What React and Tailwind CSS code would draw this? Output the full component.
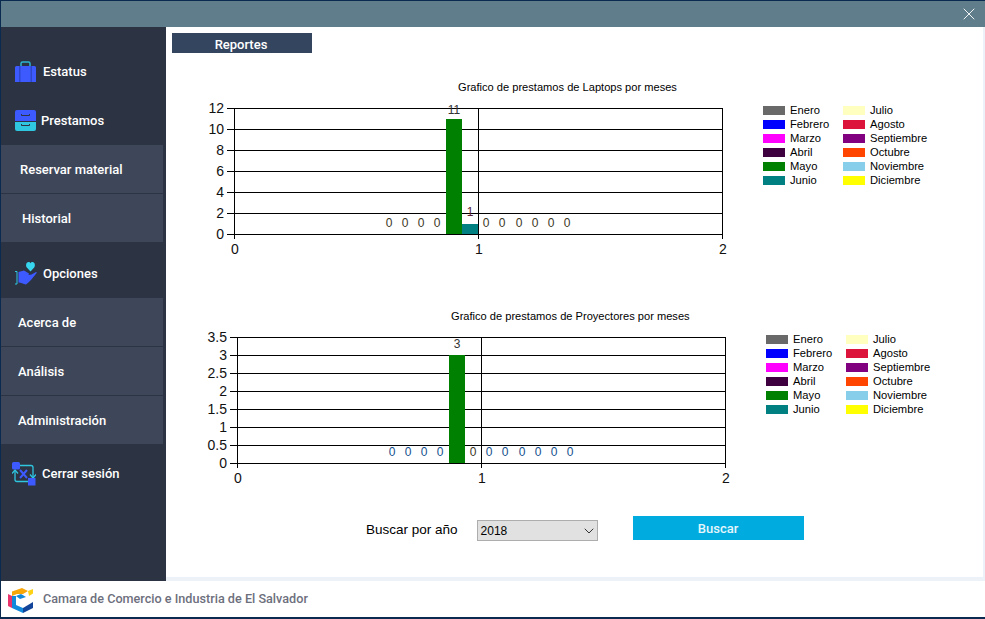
import React from 'react';
import { ChevronDown, X } from 'lucide-react';

const MONTHS = [
  ['Enero', 'bg-[#696969]'],
  ['Febrero', 'bg-[#0000ff]'],
  ['Marzo', 'bg-[#ff00ff]'],
  ['Abril', 'bg-[#3f0040]'],
  ['Mayo', 'bg-[#008000]'],
  ['Junio', 'bg-[#008080]'],
  ['Julio', 'bg-[#ffffc0]'],
  ['Agosto', 'bg-[#dc143c]'],
  ['Septiembre', 'bg-[#800080]'],
  ['Octubre', 'bg-[#ff4500]'],
  ['Noviembre', 'bg-[#87ceeb]'],
  ['Diciembre', 'bg-[#ffff00]'],
];

const PLOT = { left: 44, right: 532, top: 13, bottom: 139 };

function Legend() {
  return (
    <div className="grid grid-flow-col grid-rows-6 grid-cols-[80px_80px] ml-[23px] mt-[24px] h-[84px] text-[11.2px] text-black">
      {MONTHS.map(([name, color]) => (
        <div key={name} className="flex items-center gap-[5px] h-[14px]">
          <span className={`w-[22px] h-[9px] shrink-0 ${color}`} />
          <span className="whitespace-nowrap">{name}</span>
        </div>
      ))}
    </div>
  );
}

function Chart({ yLabels, bars, labels, labelColor }) {
  const step = (PLOT.bottom - PLOT.top) / (yLabels.length - 1);
  const mid = (PLOT.left + PLOT.right) / 2;
  return (
    <svg width="550" height="165" className="block" fontFamily="'Liberation Sans', Arial, sans-serif">
      <g stroke="#000" strokeWidth="1" shapeRendering="crispEdges">
        {yLabels.map((_, i) => {
          const y = PLOT.top + step * i + 0.5;
          return <line key={i} x1={PLOT.left - 7} x2={PLOT.right + 0.5} y1={y} y2={y} />;
        })}
        {[PLOT.left, mid, PLOT.right].map((x) => (
          <line key={x} x1={x + 0.5} x2={x + 0.5} y1={PLOT.top} y2={PLOT.bottom + 5} />
        ))}
      </g>
      {bars.map((b) => (
        <rect key={b.x} x={b.x} y={b.y} width="16" height={PLOT.bottom - b.y} fill={b.fill} />
      ))}
      {yLabels.map((label, i) => (
        <text key={label} x={PLOT.left - 10} y={PLOT.bottom - step * i + 5} textAnchor="end" fontSize="14" fill="#111">
          {label}
        </text>
      ))}
      {['0', '1', '2'].map((label, i) => (
        <text key={label} x={PLOT.left + 1 + 244 * i} y="159" textAnchor="middle" fontSize="14" fill="#111">
          {label}
        </text>
      ))}
      {labels.map((l, i) => (
        <text key={i} x={l.x} y={l.y} textAnchor="middle" fontSize="12" fill={l.color || labelColor}>
          {l.text}
        </text>
      ))}
    </svg>
  );
}

function ChartBlock({ title, titleLeft, className, ...chart }) {
  return (
    <section className={`flex ${className}`}>
      <div>
        <h2 className="h-[16px] text-[11.1px] leading-[16px] font-normal text-black whitespace-nowrap" style={{ paddingLeft: titleLeft }}>
          {title}
        </h2>
        <Chart {...chart} />
      </div>
      <Legend />
    </section>
  );
}

const zeros = (xs, y) => xs.map((x) => ({ x, y, text: '0' }));

const laptops = {
  title: 'Grafico de prestamos de Laptops por meses',
  titleLeft: 268,
  yLabels: ['0', '2', '4', '6', '8', '10', '12'],
  labelColor: '#3a3524',
  bars: [
    { x: 256, y: 24, fill: '#008000' },
    { x: 272, y: 129, fill: '#008080' },
  ],
  labels: [
    ...zeros([199, 215, 231, 247, 296, 312, 329, 345, 361, 377], 132),
    { x: 264, y: 19, text: '11', color: '#333' },
    { x: 280, y: 121, text: '1', color: '#5a2030' },
  ],
};

const proyectores = {
  title: 'Grafico de prestamos de Proyectores por meses',
  titleLeft: 258,
  yLabels: ['0', '0.5', '1', '1.5', '2', '2.5', '3', '3.5'],
  labelColor: '#134f8c',
  bars: [{ x: 256, y: 31, fill: '#008000' }],
  labels: [
    ...zeros([199, 215, 231, 247], 132),
    ...zeros([280, 296, 312, 329, 345, 361, 377], 132).map((l) => (l.x === 280 ? { ...l, color: '#3a3524' } : l)),
    { x: 264, y: 24, text: '3', color: '#333' },
  ],
};

function BriefcaseIcon() {
  return (
    <svg width="21" height="21" viewBox="0 0 21 21">
      <path d="M6 5V2.500A1.500 1.500 0 0 1 7.500 1h6A1.500 1.500 0 0 1 15 2.500V5" fill="none" stroke="#2bb5d0" strokeWidth="1.500" />
      <path d="M1.500 5h18a1.500 1.500 0 0 1 1.500 1.500V21H0V6.500A1.500 1.500 0 0 1 1.500 5Z" fill="#3d5afe" />
      <rect x="4" y="5" width="1.500" height="16" fill="#2f47c9" />
      <rect x="15.500" y="5" width="1.500" height="16" fill="#2f47c9" />
    </svg>
  );
}

function DrawerIcon() {
  return (
    <svg width="21" height="21" viewBox="0 0 21 21">
      <path d="M2 0h17a2 2 0 0 1 2 2v9H0V2a2 2 0 0 1 2-2Z" fill="#3d5afe" />
      <path d="M0 12h21v7a2 2 0 0 1-2 2H2a2 2 0 0 1-2-2Z" fill="#2fc6e0" />
      <path d="M6.500 4v1.500h8V4" fill="none" stroke="#2c3343" strokeWidth="1" />
      <path d="M6.500 14v1.500h8V14" fill="none" stroke="#2c3343" strokeWidth="1" />
    </svg>
  );
}

function HandHeartIcon() {
  return (
    <svg width="22" height="24" viewBox="0 0 22 24">
      <path d="M3.500 10 9 8.500l5 3-.5 1.500 3-.5 4.500-2.500c.8-.2.8.600.4 1.200C18.500 15 14.500 20 11 22.500 8.500 22 5.500 20.500 3.500 20.500Z" fill="#3d5afe" />
      <path d="M0 9.500h2V22H0" fill="none" stroke="#2fc6e0" strokeWidth="1" />
      <path d="M15.500 9.500 11.800 5.500C10.500 4 11 0 13.500 0c1 0 1.600.5 2 1.200.4-.7 1-1.200 2-1.200C20 0 20.500 4 19.200 5.500Z" fill="#37d5ee" />
    </svg>
  );
}

function SwapIcon() {
  return (
    <svg width="24" height="24" viewBox="0 0 24 24">
      <path d="M7 3.500h12a2 2 0 0 1 2 2V15" fill="none" stroke="#2fc6e0" strokeWidth="1.300" />
      <path d="M18 12.500 21 16l3-3.500" fill="none" stroke="#2fc6e0" strokeWidth="1.300" />
      <path d="M17 19.500H5a2 2 0 0 1-2-2V9" fill="none" stroke="#2fc6e0" strokeWidth="1.300" />
      <path d="M0 11.500 3 8l3 3.500" fill="none" stroke="#2fc6e0" strokeWidth="1.300" />
      <path d="M8 8l7 8M15 8l-7 8" stroke="#3d5afe" strokeWidth="2" />
      <rect x="0" y="0" width="8" height="7.500" rx="1.500" fill="#3d5afe" />
      <rect x="16" y="16" width="7.500" height="7.500" fill="#3d5afe" />
    </svg>
  );
}

function Logo() {
  return (
    <svg width="26" height="27" viewBox="0 0 26 27" className="mt-[2px]">
      <path d="M4 4.500 14 1l6 3-5 3-6 0-5 2Z" fill="#f7a70a" />
      <path d="M20 4l5-2v4.500L21 9Z" fill="#fcd116" />
      <path d="M0 7l4 2v12l-4-2Z" fill="#e8336d" />
      <path d="M4 9h4v9l7 3v5L4 21Z" fill="#1389dc" />
      <path d="M8 9l5-2 5 3-6 2Z" fill="#1389dc" />
      <path d="M15 21l10-6v6l-10 5Z" fill="#12449a" />
    </svg>
  );
}

function NavHeading({ icon, label, gap, pad, height, top = 0 }) {
  return (
    <div className={`flex items-center ${gap} ${pad} ${height} text-white text-[13px] font-medium`} style={{ paddingTop: top }}>
      {icon}
      <span>{label}</span>
    </div>
  );
}

function SubItem({ label, pad }) {
  return (
    <div className={`flex items-center h-[48px] w-[162px] pt-[2px] bg-[#3e4759] text-white text-[13px] font-medium ${pad}`}>
      {label}
    </div>
  );
}

export default function App() {
  return (
    <div className="w-[985px] h-[619px] flex flex-col overflow-hidden bg-[#0a2a50] pt-px pb-[2px] font-['Roboto',sans-serif]">
      <header className="h-[26px] shrink-0 flex items-center justify-end pr-[6px] bg-[#5f7d8a] ml-px">
        <X size={20} strokeWidth={1.1} className="text-white" />
      </header>

      <div className="flex flex-1 min-h-0 ml-px">
        <aside className="w-[165px] shrink-0 bg-[#2c3342] pt-[20px]">
          <NavHeading icon={<BriefcaseIcon />} label="Estatus" gap="gap-[7px]" pad="pl-[14px]" height="h-[49px]" />
          <NavHeading icon={<DrawerIcon />} label="Prestamos" gap="gap-[5px]" pad="pl-[14px]" height="h-[49px]" />
          <div className="flex flex-col gap-px">
            <SubItem label="Reservar material" pad="pl-[19px]" />
            <SubItem label="Historial" pad="pl-[21px]" />
          </div>
          <div className="h-px" />
          <NavHeading icon={<HandHeartIcon />} label="Opciones" gap="gap-[6px]" pad="pl-[14px]" height="h-[55px]" top={7} />
          <div className="flex flex-col gap-px">
            <SubItem label="Acerca de" pad="pl-[17px]" />
            <SubItem label="Análisis" pad="pl-[17px]" />
            <SubItem label="Administración" pad="pl-[17px]" />
          </div>
          <div className="h-px" />
          <NavHeading icon={<SwapIcon />} label="Cerrar sesión" gap="gap-[6px]" pad="pl-[11px]" height="h-[57px]" />
        </aside>

        <div className="flex-1 min-w-0 flex flex-col bg-[#edf2f8]">
          <main className="flex-1 min-h-0 pt-[6px] mr-[2px] bg-white font-['Liberation_Sans',Arial,sans-serif]">
            <div className="ml-[6px] w-[140px] h-[20px] flex items-center justify-center pt-[3px] pr-[2px] bg-[#34455f] text-white text-[13px] font-medium font-['Roboto',sans-serif]">
              Reportes
            </div>

            <ChartBlock {...laptops} className="ml-[24px] mt-[26px]" />
            <ChartBlock {...proyectores} className="ml-[27px] mt-[48px]" />

            <div className="flex items-start pl-[200px] mt-[27px]">
              <span className="mt-[5px] text-[13.5px] leading-[18px] text-black">Buscar por año</span>
              <div className="ml-[19px] mt-[4px] w-[121px] h-[21px] flex items-center justify-between border border-[#adadad] bg-[#e1e1e1] pl-[3px] text-[12px] text-black">
                <span>2018</span>
                <ChevronDown size={16} strokeWidth={1.5} className="text-[#333]" />
              </div>
              <button className="ml-[35px] w-[171px] h-[24px] pt-px bg-[#00acdf] text-[#e6f6fc] text-[13px] font-medium font-['Roboto',sans-serif]">
                Buscar
              </button>
            </div>
          </main>
          <div className="h-[4px] shrink-0" />
        </div>
      </div>

      <footer className="h-[36px] shrink-0 ml-px flex items-center gap-[9px] pl-[7px] bg-white text-[#6d6f7d] text-[12.65px] font-medium">
        <Logo />
        <span>Camara de Comercio e Industria de El Salvador</span>
      </footer>
    </div>
  );
}
